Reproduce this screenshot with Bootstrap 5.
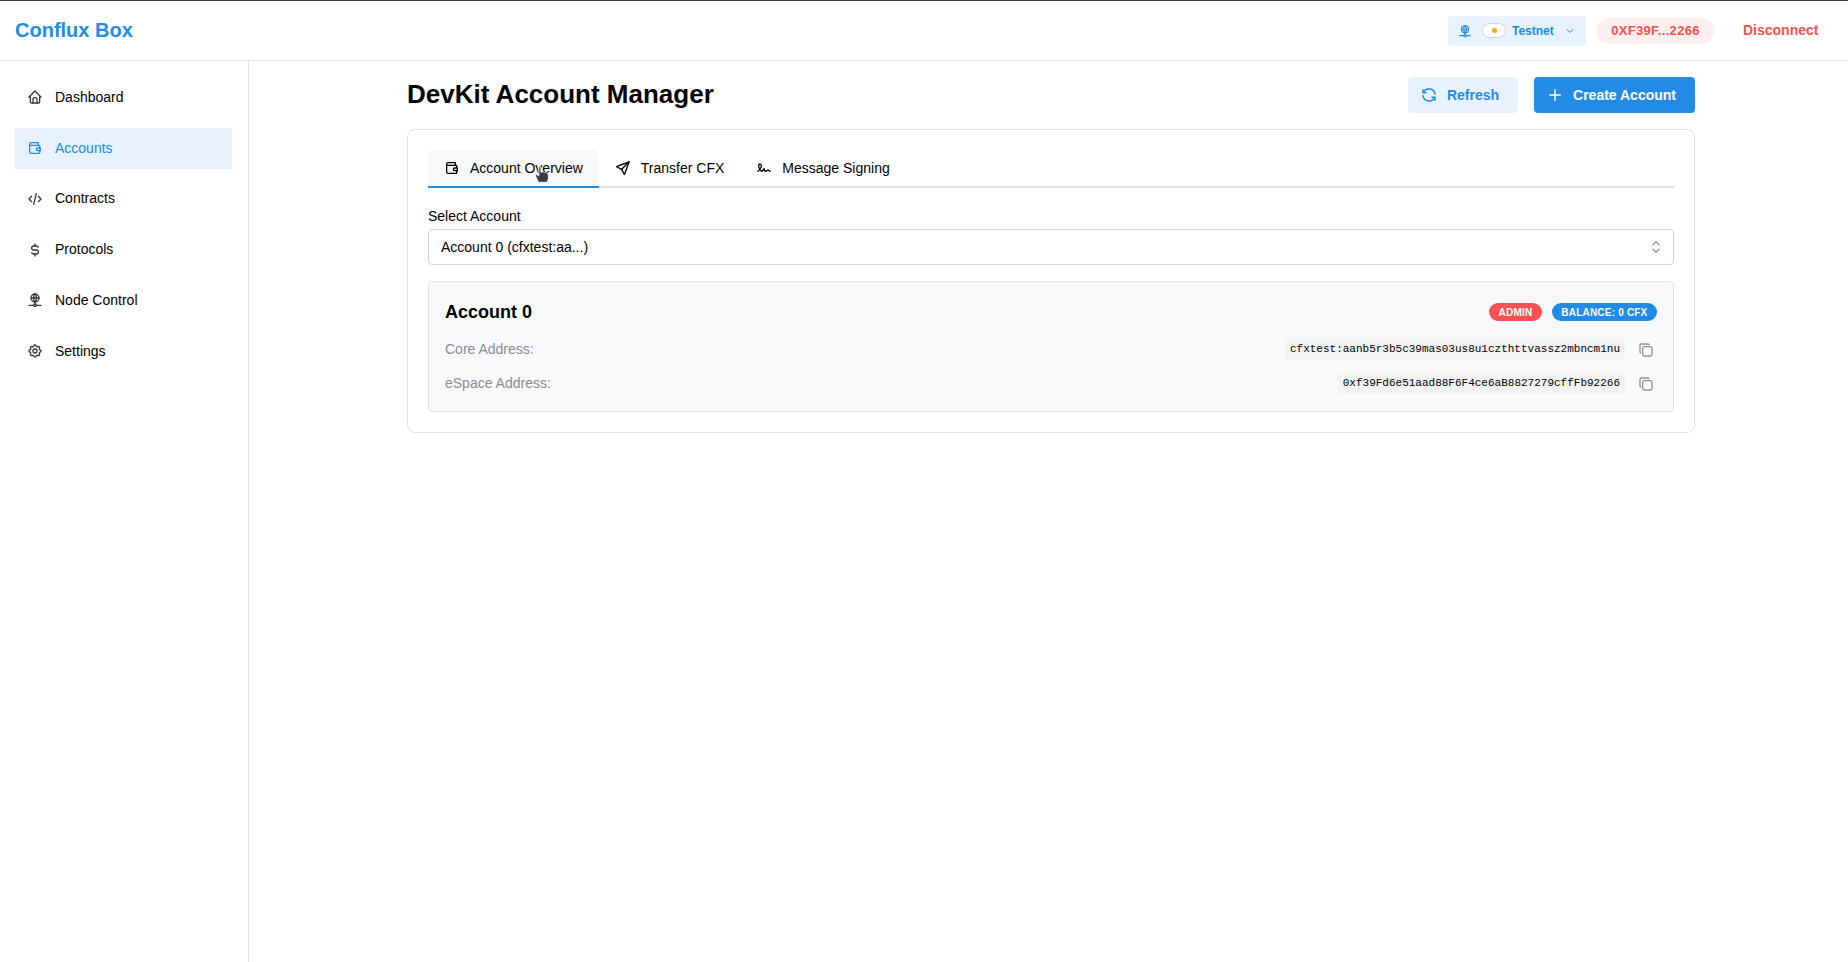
<!DOCTYPE html>
<html lang="en">
<head>
    <meta charset="UTF-8">
    <meta name="viewport" content="width=device-width, initial-scale=1.0">
    <title>Conflux Box</title>
  <link href="https://cdn.jsdelivr.net/npm/bootstrap@5.3.2/dist/css/bootstrap.min.css" rel="stylesheet">

  <style>
    html, body{
        height: 100%;
    }
    body{
        font-family: "Liberation Sans", Arial, sans-serif;
        font-size: 14px;
        color: #000;
        background-color: #fff;
        border-top: 1px solid #3a3f44;
        overflow: hidden;
    }
    svg{
        display: block;
        flex: none;
        fill: none;
        stroke: currentColor;
        stroke-width: 2;
        stroke-linecap: round;
        stroke-linejoin: round;
    }
    .top-bar{
        height: 60px;
        padding: 0 15px;
        border-bottom: 1px solid #dee2e6;
    }
    .brand-name{
        font-size: 20px;
        font-weight: 700;
        color: #228be6;
        text-decoration: none;
        margin-top: -2px;
    }
    .net-btn{
        height: 30px;
        width: 138px;
        margin-right: 10px;
        padding: 0 11px 0 10px;
        border-radius: 4px;
        background-color: #e7f2fc;
        color: #228be6;
        font-size: 12px;
        font-weight: 700;
        gap: 10px;
    }
    .net-toggle{
        flex: none;
        width: 24px;
        height: 15px;
        margin-right: -4px;
        border: 1px solid #ced4da;
        border-radius: 8px;
        background-color: #fff;
    }
    .net-dot{
        width: 5px;
        height: 5px;
        border-radius: 50%;
        background-color: #fdab12;
    }
    .addr-pill{
        height: 26px;
        width: 118px;
        padding-left: 1px;
        border-radius: 13px;
        background-color: #ffeeee;
        color: #fa5252;
        font-size: 13px;
        font-weight: 700;
        letter-spacing: .3px;
    }
    .disconnect-link{
        width: 75px;
        margin-left: 29px;
        margin-right: 15px;
        color: #fa5252;
        font-weight: 700;
        text-decoration: none;
        white-space: nowrap;
    }
    .app-body{
        height: calc(100% - 60px);
    }
    .side-bar{
        width: 249px;
        flex: none;
        padding: 16px 16px 0 15px;
        border-right: 1px solid #dee2e6;
    }
    .side-link{
        height: 40.75px;
        margin-bottom: 10px;
        padding: 0 12px;
        gap: 12px;
        color: #000;
        text-decoration: none;
    }
    .side-link svg{
        color: #343a40;
    }
    .side-link.current{
        background-color: #e7f2fc;
        color: #228be6;
    }
    .side-link.current svg{
        color: #228be6;
    }
    .main-col{
        padding-left: 158px;
        padding-right: 153px;
    }
    .page-title{
        font-size: 26px;
        font-weight: 700;
        line-height: 36px;
        margin: -2px 0 0;
    }
    .head-row{
        padding-top: 16px;
        padding-bottom: 16px;
    }
    .soft-btn, .solid-btn{
        height: 36px;
        font-size: 14px;
        font-weight: 700;
        border-radius: 4px;
        border: 0;
        gap: 9px;
        padding: 0 19px 0 12px;
    }
    .soft-btn, .soft-btn:hover{
        background-color: #e7f2fc;
        color: #228be6;
    }
    .solid-btn, .solid-btn:hover{
        background-color: #228be6;
        color: #fff;
    }
    .manager-box{
        padding: 20px;
        border: 1px solid #dee2e6;
        border-radius: 8px;
    }
    .tab-strip{
        border-bottom: 2px solid #dee2e6;
    }
    .tab-item{
        height: 38px;
        margin-bottom: -2px;
        padding: 0 16px;
        gap: 10px;
        color: #000;
        border-bottom: 2px solid transparent;
        border-radius: 4px 4px 0 0;
        text-decoration: none;
    }
    .tab-item.current{
        background-color: #f8f9fa;
        border-bottom-color: #228be6;
    }
    .field-label{
        font-size: 14px;
        line-height: 21px;
        margin: 18px 0 2px;
    }
    .acct-select{
        height: 36px;
        font-size: 14px;
        color: #000;
        padding: 0 28px 0 12px;
        border: 1px solid #ced4da;
        border-radius: 4px;
        background-size: 18px 18px;
        background-position: right 8px center;
        background-image: url("data:image/svg+xml,%3Csvg xmlns='http://www.w3.org/2000/svg' viewBox='0 0 24 24' fill='none' stroke='%23868e96' stroke-width='1.6' stroke-linecap='round' stroke-linejoin='round'%3E%3Cpath d='M8 9l4-4 4 4M16 15l-4 4-4-4'/%3E%3C/svg%3E");
    }
    .acct-panel{
        margin-top: 16px;
        padding: 16px 16px 17px;
        background-color: #f8f9fa;
        border: 1px solid #dee2e6;
        border-radius: 4px;
    }
    .acct-name{
        font-size: 18px;
        font-weight: 700;
        line-height: 28px;
        margin: 0;
    }
    .tag-wrap{
        gap: 10px;
    }
    .tag-pill{
        height: 18px;
        padding: 0 9.5px;
        border-radius: 9px;
        color: #fff;
        font-size: 10px;
        font-weight: 700;
        letter-spacing: .2px;
    }
    .tag-red{
        background-color: #fa5252;
    }
    .tag-blue{
        background-color: #228be6;
    }
    .addr-row{
        height: 21px;
        margin-top: 13px;
        color: #868e96;
    }
    .addr-code{
        height: 21px;
        padding: 0 5px;
        font-family: "Liberation Mono", "Courier New", monospace;
        font-size: 11px;
        line-height: 21px;
        color: #000;
        background-color: #f1f3f5;
        border-radius: 4px;
    }
    .copy-icon{
        color: #909296;
        margin: 1px 3px 0 13px;
    }
    .hand-cursor{
        position: absolute;
        left: 533px;
        top: 165px;
    }
  </style>

</head>
<body>
    <header class="top-bar d-flex align-items-center justify-content-between">
        <a class="brand-name" href="#">Conflux Box</a>
        <div class="d-flex align-items-center">
            <div class="net-btn d-flex align-items-center">
                <svg width="14" height="14" viewBox="0 0 24 24"><path d="M6 9a6 6 0 1 0 12 0a6 6 0 0 0-12 0"/><path d="M12 3c1.333.333 2 2.333 2 6s-.667 5.667-2 6"/><path d="M12 3c-1.333.333-2 2.333-2 6s.667 5.667 2 6"/><path d="M6 9h12M3 20h7M14 20h7"/><path d="M10 20a2 2 0 1 0 4 0a2 2 0 0 0-4 0"/><path d="M12 15v3"/></svg>
                <span class="net-toggle d-flex align-items-center justify-content-center"><span class="net-dot"></span></span>
                <span>Testnet</span>
                <svg class="ms-auto" width="12" height="12" viewBox="0 0 24 24"><path d="M6 9l6 6 6-6"/></svg>
            </div>
            <div class="addr-pill d-flex align-items-center justify-content-center">0XF39F...2266</div>
            <a class="disconnect-link" href="#">Disconnect</a>
        </div>
    </header>

    <div class="app-body d-flex">
        <nav class="side-bar">
            <a class="side-link d-flex align-items-center" href="#">
                <svg width="16" height="16" viewBox="0 0 24 24"><path d="M5 12H3l9-9 9 9h-2"/><path d="M5 12v7a2 2 0 0 0 2 2h10a2 2 0 0 0 2-2v-7"/><path d="M9 21v-6a2 2 0 0 1 2-2h2a2 2 0 0 1 2 2v6"/></svg>
                <span>Dashboard</span>
            </a>
            <a class="side-link current d-flex align-items-center" href="#">
                <svg width="16" height="16" viewBox="0 0 24 24"><path d="M17 8V5a1 1 0 0 0-1-1H6a2 2 0 0 0 0 4h12a1 1 0 0 1 1 1v3m0 4v3a1 1 0 0 1-1 1H6a2 2 0 0 1-2-2V6"/><path d="M20 12v4h-4a2 2 0 0 1 0-4h4"/></svg>
                <span>Accounts</span>
            </a>
            <a class="side-link d-flex align-items-center" href="#">
                <svg width="16" height="16" viewBox="0 0 24 24"><path d="M7 8l-4 4 4 4M17 8l4 4-4 4M14 4l-4 16"/></svg>
                <span>Contracts</span>
            </a>
            <a class="side-link d-flex align-items-center" href="#">
                <svg width="16" height="16" viewBox="0 0 24 24"><path d="M16.700 8a3 3 0 0 0-2.700-2h-4a3 3 0 0 0 0 6h4a3 3 0 0 1 0 6h-4a3 3 0 0 1-2.700-2"/><path d="M12 3v3m0 12v3"/></svg>
                <span>Protocols</span>
            </a>
            <a class="side-link d-flex align-items-center" href="#">
                <svg width="16" height="16" viewBox="0 0 24 24"><path d="M6 9a6 6 0 1 0 12 0a6 6 0 0 0-12 0"/><path d="M12 3c1.333.333 2 2.333 2 6s-.667 5.667-2 6"/><path d="M12 3c-1.333.333-2 2.333-2 6s.667 5.667 2 6"/><path d="M6 9h12M3 20h7M14 20h7"/><path d="M10 20a2 2 0 1 0 4 0a2 2 0 0 0-4 0"/><path d="M12 15v3"/></svg>
                <span>Node Control</span>
            </a>
            <a class="side-link d-flex align-items-center" href="#">
                <svg width="16" height="16" viewBox="0 0 24 24"><path d="M10.325 4.317c.426-1.756 2.924-1.756 3.350 0a1.724 1.724 0 0 0 2.573 1.066c1.543-.94 3.310.826 2.370 2.370a1.724 1.724 0 0 0 1.065 2.572c1.756.426 1.756 2.924 0 3.350a1.724 1.724 0 0 0-1.066 2.573c.94 1.543-.826 3.310-2.370 2.370a1.724 1.724 0 0 0-2.572 1.065c-.426 1.756-2.924 1.756-3.350 0a1.724 1.724 0 0 0-2.573-1.066c-1.543.94-3.310-.826-2.370-2.370a1.724 1.724 0 0 0-1.065-2.572c-1.756-.426-1.756-2.924 0-3.350a1.724 1.724 0 0 0 1.066-2.573c-.94-1.543.826-3.310 2.370-2.370c1 .608 2.296.07 2.572-1.065z"/><path d="M9 12a3 3 0 1 0 6 0a3 3 0 0 0-6 0"/></svg>
                <span>Settings</span>
            </a>
        </nav>

        <main class="main-col flex-grow-1">
            <div class="head-row d-flex align-items-center justify-content-between">
                <h1 class="page-title">DevKit Account Manager</h1>
                <div class="d-flex gap-3">
                    <button class="btn soft-btn d-flex align-items-center">
                        <svg width="18" height="18" viewBox="0 0 24 24"><path d="M20 11a8.100 8.100 0 0 0-15.500-2m-.5-4v4h4"/><path d="M4 13a8.100 8.100 0 0 0 15.500 2m.5 4v-4h-4"/></svg>
                        Refresh
                    </button>
                    <button class="btn solid-btn d-flex align-items-center">
                        <svg width="18" height="18" viewBox="0 0 24 24"><path d="M12 5v14M5 12h14"/></svg>
                        Create Account
                    </button>
                </div>
            </div>

            <section class="manager-box">
                <div class="tab-strip d-flex">
                    <a class="tab-item current d-flex align-items-center" href="#">
                        <svg width="16" height="16" viewBox="0 0 24 24"><path d="M17 8V5a1 1 0 0 0-1-1H6a2 2 0 0 0 0 4h12a1 1 0 0 1 1 1v3m0 4v3a1 1 0 0 1-1 1H6a2 2 0 0 1-2-2V6"/><path d="M20 12v4h-4a2 2 0 0 1 0-4h4"/></svg>
                        <span>Account Overview</span>
                    </a>
                    <a class="tab-item d-flex align-items-center" href="#">
                        <svg width="16" height="16" viewBox="0 0 24 24"><path d="M10 14L21 3"/><path d="M21 3l-6.500 18a.55.55 0 0 1-1 0l-3.500-7-7-3.500a.55.55 0 0 1 0-1L21 3"/></svg>
                        <span>Transfer CFX</span>
                    </a>
                    <a class="tab-item d-flex align-items-center" href="#">
                        <svg width="16" height="16" viewBox="0 0 24 24"><path d="M3 17c3.333-3.333 5-6 5-8 0-3-1-3-2-3S3.968 7.085 4 9c.034 2.048 1.658 4.877 2.500 6 1.500 2 2.500 2.500 3.500 1l2-3c.333 2.667 1.333 4 3 4 .53 0 2.639-2 3-2 .517 0 1.517.667 3 2"/></svg>
                        <span>Message Signing</span>
                    </a>
                </div>

                <label class="field-label d-block" for="acct">Select Account</label>
                <select id="acct" class="form-select acct-select">
                    <option>Account 0 (cfxtest:aa...)</option>
                </select>

                <div class="acct-panel">
                    <div class="d-flex align-items-center justify-content-between">
                        <h2 class="acct-name">Account 0</h2>
                        <div class="d-flex align-items-center tag-wrap">
                            <span class="tag-pill tag-red d-flex align-items-center">ADMIN</span>
                            <span class="tag-pill tag-blue d-flex align-items-center">BALANCE: 0 CFX</span>
                        </div>
                    </div>
                    <div class="addr-row d-flex align-items-center justify-content-between">
                        <span>Core Address:</span>
                        <div class="d-flex align-items-center">
                            <span class="addr-code">cfxtest:aanb5r3b5c39mas03us8u1czthttvassz2mbncm1nu</span>
                            <svg class="copy-icon" width="16" height="16" viewBox="0 0 24 24"><path d="M7 9.667A2.667 2.667 0 0 1 9.667 7h8.666A2.667 2.667 0 0 1 21 9.667v8.666A2.667 2.667 0 0 1 18.333 21H9.667A2.667 2.667 0 0 1 7 18.333z"/><path d="M4.012 16.737A2.005 2.005 0 0 1 3 15V5c0-1.100.9-2 2-2h10c.75 0 1.158.385 1.500 1"/></svg>
                        </div>
                    </div>
                    <div class="addr-row d-flex align-items-center justify-content-between">
                        <span>eSpace Address:</span>
                        <div class="d-flex align-items-center">
                            <span class="addr-code">0xf39Fd6e51aad88F6F4ce6aB8827279cffFb92266</span>
                            <svg class="copy-icon" width="16" height="16" viewBox="0 0 24 24"><path d="M7 9.667A2.667 2.667 0 0 1 9.667 7h8.666A2.667 2.667 0 0 1 21 9.667v8.666A2.667 2.667 0 0 1 18.333 21H9.667A2.667 2.667 0 0 1 7 18.333z"/><path d="M4.012 16.737A2.005 2.005 0 0 1 3 15V5c0-1.100.9-2 2-2h10c.75 0 1.158.385 1.500 1"/></svg>
                        </div>
                    </div>
                </div>
            </section>
        </main>
    </div>

    <svg class="hand-cursor" width="18" height="18" viewBox="0 0 15 17"><path d="M4 16L1.500 10.500C1 9 2.500 8.500 3.500 9.500L4.500 10.500V2.500C4.500 1 6.500 1 6.500 2.500V7L7.500 6.500C8.500 6 9 6.500 9.500 7C10.500 6.500 11 7 11.500 7.500C12.500 7.500 13.500 8 13.500 9.500V13L12.500 16z" fill="#343a40" stroke="#fff" stroke-width="0.8"/></svg>
</body>
</html>
